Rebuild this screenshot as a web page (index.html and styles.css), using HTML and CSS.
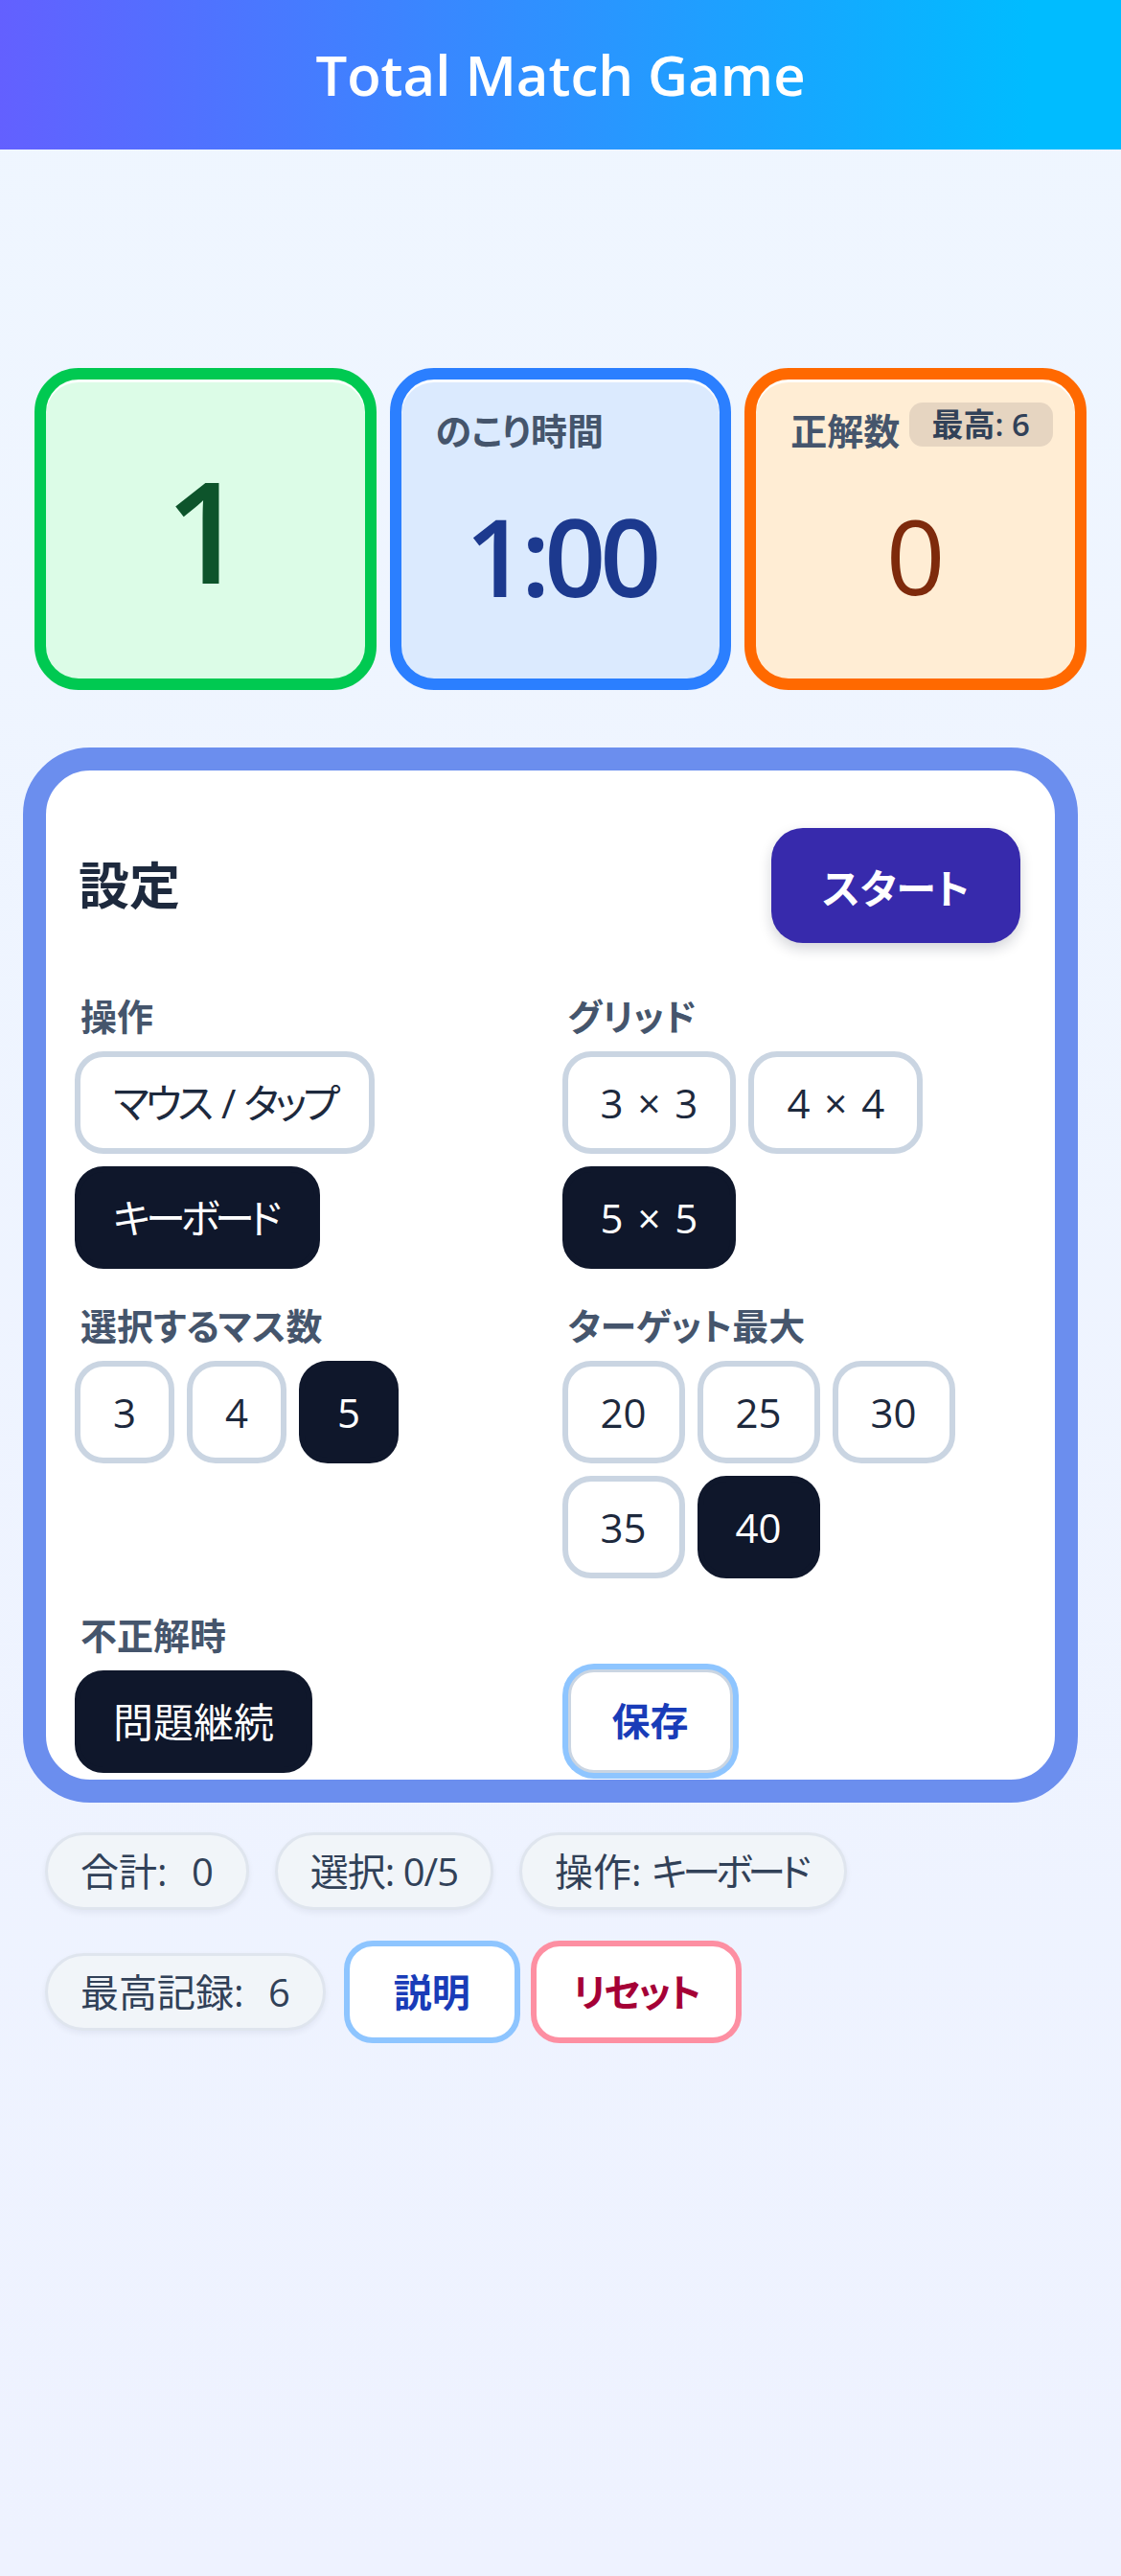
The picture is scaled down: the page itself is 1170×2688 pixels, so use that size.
FILE: index.html
```html
<!DOCTYPE html>
<html lang="ja">
<head>
<meta charset="utf-8">
<title>Total Match Game</title>
<link rel="stylesheet" href="styles.css">
</head>
<body>
<header class="topbar"><h1 class="title">Total Match Game</h1></header>
<main class="main">
  <section class="cards">
    <div class="card card-target">
      <div class="card-value value-target">1</div>
    </div>
    <div class="card card-time">
      <div class="card-label">のこり時間</div>
      <div class="card-value value-time">1:00</div>
    </div>
    <div class="card card-score">
      <div class="card-label">正解数</div>
      <span class="badge">最高: 6</span>
      <div class="card-value value-score">0</div>
    </div>
  </section>

  <section class="panel">
    <div class="panel-head">
      <h2 class="panel-title">設定</h2>
      <button class="start">スタート</button>
    </div>
    <div class="grid">
      <div class="field">
        <div class="label">操作</div>
        <div class="opts">
          <button class="opt opt-kana">マウス / タップ</button>
          <button class="opt on"><span class="tight">キーボード</span></button>
        </div>
      </div>
      <div class="field">
        <div class="label">グリッド</div>
        <div class="opts">
          <button class="opt opt-size">3 × 3</button>
          <button class="opt opt-size">4 × 4</button>
          <button class="opt opt-size on">5 × 5</button>
        </div>
      </div>
      <div class="field">
        <div class="label">選択するマス数</div>
        <div class="opts">
          <button class="opt">3</button>
          <button class="opt">4</button>
          <button class="opt on">5</button>
        </div>
      </div>
      <div class="field">
        <div class="label">ターゲット最大</div>
        <div class="opts">
          <button class="opt">20</button>
          <button class="opt">25</button>
          <button class="opt">30</button>
          <button class="opt">35</button>
          <button class="opt on">40</button>
        </div>
      </div>
      <div class="field">
        <div class="label">不正解時</div>
        <div class="opts">
          <button class="opt on">問題継続</button>
        </div>
      </div>
      <div class="field field-save">
        <button class="save">保存</button>
      </div>
    </div>
  </section>

  <section class="stats">
    <span class="pill">合計: <span class="pv">0</span></span>
    <span class="pill pill-tight">選択: 0/5</span>
    <span class="pill">操作: <span class="tight-s">キーボード</span></span>
    <span class="pill">最高記録: <span class="pv">6</span></span>
    <button class="act act-help">説明</button>
    <button class="act act-reset">リセット</button>
  </section>
</main>
</body>
</html>
```
FILE: styles.css
```css
* { box-sizing: border-box; }
html, body { margin: 0; padding: 0; }
body {
  font-family: "Open Sans", "Noto Sans CJK JP", sans-serif;
  font-feature-settings: "palt";
  background: linear-gradient(180deg, #eff6ff 0%, #eef2ff 100%);
  min-height: 2688px;
  color: #1d293d;
}
button { font-family: inherit; font-feature-settings: "palt"; cursor: pointer; }

.topbar {
  height: 156px;
  background: linear-gradient(90deg, #6360ff 0%, #00bcff 92%);
  display: flex;
  align-items: center;
  justify-content: center;
}
.title {
  margin: 0;
  color: #fff;
  font-size: 58px;
  font-weight: 600;
  line-height: 1;
}

.main { padding: 228px 36px 0; }

.cards {
  display: grid;
  grid-template-columns: repeat(3, 1fr);
  gap: 14px;
}
.card {
  position: relative;
  height: 336px;
  border: 12px solid;
  border-radius: 46px;
  padding: 30px 36px;
  display: flex;
  flex-direction: column;
  box-shadow: inset 0 3px 0 rgba(255, 255, 255, 0.85);
}
.card-target { border-color: #00c951; background: #dcfce7; }
.card-time { border-color: #2b7fff; background: #dbeafe; }
.card-score { border-color: #ff6900; background: #ffedd4; }
.card-label {
  font-size: 38px;
  font-weight: 700;
  line-height: 46px;
  color: #45556c;
}
.card-value {
  flex: 1;
  display: flex;
  align-items: center;
  justify-content: center;
}
.value-target { font-size: 147px; font-weight: 600; color: #0d542b; }
.value-time { font-size: 112px; font-weight: 600; color: #1c398e; letter-spacing: -6px; margin-top: 8px; }
.value-score { font-size: 108px; font-weight: 400; color: #7e2a0c; margin-top: 8px; }
.badge {
  position: absolute;
  top: 24px;
  right: 23px;
  height: 46px;
  line-height: 46px;
  padding: 0 24px;
  border-radius: 14px;
  background: #e6d5c1;
  color: #314158;
  font-size: 33px;
  font-weight: 600;
}

.panel {
  margin: 60px 9px 0 -12px;
  border: 24px solid #6b8eee;
  border-radius: 70px;
  background: #fff;
  padding: 60px 36px 7px 30px;
  overflow: hidden;
}
.panel-head {
  display: flex;
  justify-content: space-between;
  align-items: center;
}
.panel-title {
  margin: 0 0 0 4px;
  font-size: 53px;
  font-weight: 700;
  color: #1d293d;
  line-height: 1.2;
}
.start {
  width: 260px;
  height: 120px;
  border: 0;
  border-radius: 33px;
  background: #372aac;
  color: #fff;
  font-size: 42px;
  font-weight: 700;
  box-shadow: 0 6px 14px rgba(15, 23, 43, 0.18);
}

.grid {
  display: grid;
  grid-template-columns: 1fr 1fr;
  column-gap: 30px;
  row-gap: 36px;
  margin-top: 53px;
}
.field { min-width: 0; }
.label {
  font-size: 38px;
  font-weight: 700;
  line-height: 46px;
  color: #45556c;
  margin: 0 0 14px 6px;
}
.opts {
  display: flex;
  flex-wrap: wrap;
  gap: 13px 13px;
}
.opt {
  height: 107px;
  padding: 0 34px;
  border: 6px solid #cad5e2;
  border-radius: 30px;
  background: #fff;
  color: #1d293d;
  font-size: 42px;
  font-weight: 400;
  line-height: 1;
}
.opt-kana { letter-spacing: -4px; word-spacing: 5px; }
.opt-size { word-spacing: 4px; }
.tight { letter-spacing: -5px; margin-right: 5px; }
.tight-s { letter-spacing: -5px; margin-right: 5px; }
.opt.on {
  background: #0f172b;
  border-color: #0f172b;
  color: #fff;
}
.field-save {
  display: flex;
  align-items: flex-end;
  padding-left: 6px;
}
.save {
  height: 108px;
  padding: 0 43px;
  border: 3px solid #cad5e2;
  border-radius: 27px;
  box-shadow: 0 0 0 6px #8ec5ff;
  background: #fff;
  color: #193cb8;
  font-size: 40px;
  font-weight: 700;
  line-height: 1;
}

.stats {
  display: flex;
  flex-wrap: wrap;
  align-items: center;
  gap: 24px 11px;
  margin-top: 23px;
  padding-left: 3px;
}
.pill {
  margin: 8px;
  height: 81px;
  line-height: 75px;
  padding: 0 34px;
  border: 3px solid #dfe5ee;
  border-radius: 999px;
  background: #f1f5f9;
  color: #314158;
  font-size: 40px;
  box-shadow: 0 3px 6px rgba(15, 23, 43, 0.06);
}
.pill-tight { letter-spacing: -1px; }
.pv { margin-left: 15px; }
.act {
  height: 107px;
  border: 6px solid;
  border-radius: 30px;
  background: #fff;
  font-size: 40px;
  font-weight: 700;
  line-height: 1;
}
.act-help { border-color: #8ec5ff; color: #193cb8; padding: 0 46px; }
.act-reset { border-color: #fd8fa2; color: #a50036; padding: 0 38px; letter-spacing: -2px; }
```
